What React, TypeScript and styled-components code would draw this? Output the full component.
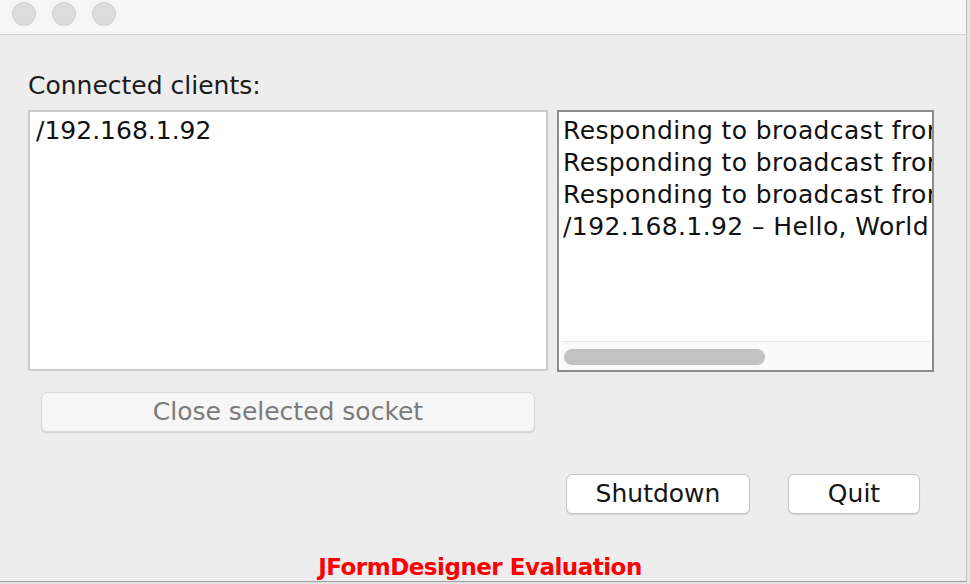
import React from "react";
import styled, { createGlobalStyle } from "styled-components";

const GlobalStyle = createGlobalStyle`
  html, body {
    margin: 0;
    padding: 0;
    background: #e4e4e4;
  }
  body {
    font-family: "DejaVu Sans", "Liberation Sans", sans-serif;
  }
`;

const Window = styled.div`
  width: 967px;
  height: 582px;
  box-sizing: border-box;
  display: flex;
  flex-direction: column;
  background: #ededed;
  border-right: 1px solid #c2c2c2;
  border-bottom: 1px solid #9e9e9e;
  overflow: hidden;
`;

const TitleBar = styled.div`
  height: 35px;
  box-sizing: border-box;
  display: flex;
  align-items: flex-start;
  gap: 16px;
  padding: 2px 0 0 12px;
  background: #f6f6f6;
  border-bottom: 1px solid #d3d3d3;
`;

const Light = styled.span`
  width: 24px;
  height: 24px;
  box-sizing: border-box;
  border-radius: 50%;
  background: #dcdcdc;
  border: 1px solid #cdcdcd;
`;

const Content = styled.div`
  flex: 1;
  display: flex;
  flex-direction: column;
  padding: 36px 32px 0 28px;
`;

const Label = styled.div`
  font-size: 25px;
  line-height: 30px;
  color: #1b1b1b;
  margin-bottom: 9px;
`;

const Panels = styled.div`
  display: flex;
  align-items: flex-start;
  gap: 9px;
`;

const ClientList = styled.div`
  width: 520px;
  height: 261px;
  box-sizing: border-box;
  background: #fff;
  border: 2px solid #cacaca;
  padding: 3px 6px;
`;

const ListRow = styled.div`
  font-size: 25px;
  line-height: 32px;
  color: #111;
`;

const LogArea = styled.div`
  width: 377px;
  height: 262px;
  box-sizing: border-box;
  background: #fff;
  border: 2px solid #8c8c8c;
  display: flex;
  flex-direction: column;
`;

// text area is horizontally scrolled: long lines run past the right edge
const LogText = styled.div`
  flex: 1;
  overflow: hidden;
  padding: 3px 0 0 4px;
`;

const LogLine = styled.div`
  font-size: 25px;
  line-height: 32px;
  letter-spacing: 0.4px;
  white-space: pre;
  color: #111;
`;

const HScroll = styled.div`
  height: 29px;
  box-sizing: border-box;
  margin: 0 2px;
  padding: 7px 3px;
  background: #fafafa;
  border-top: 1px solid #e6e6e6;
`;

const Thumb = styled.div`
  width: 201px;
  height: 16px;
  border-radius: 8px;
  background: #c2c2c2;
`;

const Button = styled.button<{ $disabled?: boolean; $width: number }>`
  width: ${(p) => p.$width}px;
  height: 40px;
  box-sizing: border-box;
  border-radius: 6px;
  border: 1px solid ${(p) => (p.$disabled ? "#d7d7d7" : "#c3c3c3")};
  background: ${(p) => (p.$disabled ? "#f6f6f6" : "#ffffff")};
  color: ${(p) => (p.$disabled ? "#7b7b7b" : "#141414")};
  box-shadow: 0 1px 1px rgba(0, 0, 0, 0.12);
  font-family: "DejaVu Sans", "Liberation Sans", sans-serif;
  font-size: 25px;
  line-height: 30px;
  padding: 0;
  cursor: default;
`;

const CloseRow = styled.div`
  margin: 20px 0 0 13px;
`;

const Actions = styled.div`
  margin-top: 42px;
  display: flex;
  justify-content: flex-end;
  gap: 38px;
  padding-right: 14px;
`;

const Footer = styled.div`
  margin-top: auto;
  text-align: center;
  padding: 0 6px 2px 0;
  color: #ff0000;
  font-weight: bold;
  font-size: 23px;
  letter-spacing: -0.5px;
  line-height: 24px;
`;

const log = [
  "Responding to broadcast from /192.168.1.92",
  "Responding to broadcast from /192.168.1.92",
  "Responding to broadcast from /192.168.1.92",
  "/192.168.1.92 – Hello, World",
];

export default function App() {
  return (
    <>
      <GlobalStyle />
      <Window>
        <TitleBar>
          <Light />
          <Light />
          <Light />
        </TitleBar>
        <Content>
          <Label>Connected clients:</Label>
          <Panels>
            <ClientList>
              <ListRow>/192.168.1.92</ListRow>
            </ClientList>
            <LogArea>
              <LogText>
                {log.map((line, i) => (
                  <LogLine key={i}>{line}</LogLine>
                ))}
              </LogText>
              <HScroll>
                <Thumb />
              </HScroll>
            </LogArea>
          </Panels>
          <CloseRow>
            <Button $disabled $width={494} disabled>
              Close selected socket
            </Button>
          </CloseRow>
          <Actions>
            <Button $width={184}>Shutdown</Button>
            <Button $width={132}>Quit</Button>
          </Actions>
        </Content>
        <Footer>JFormDesigner Evaluation</Footer>
      </Window>
    </>
  );
}
